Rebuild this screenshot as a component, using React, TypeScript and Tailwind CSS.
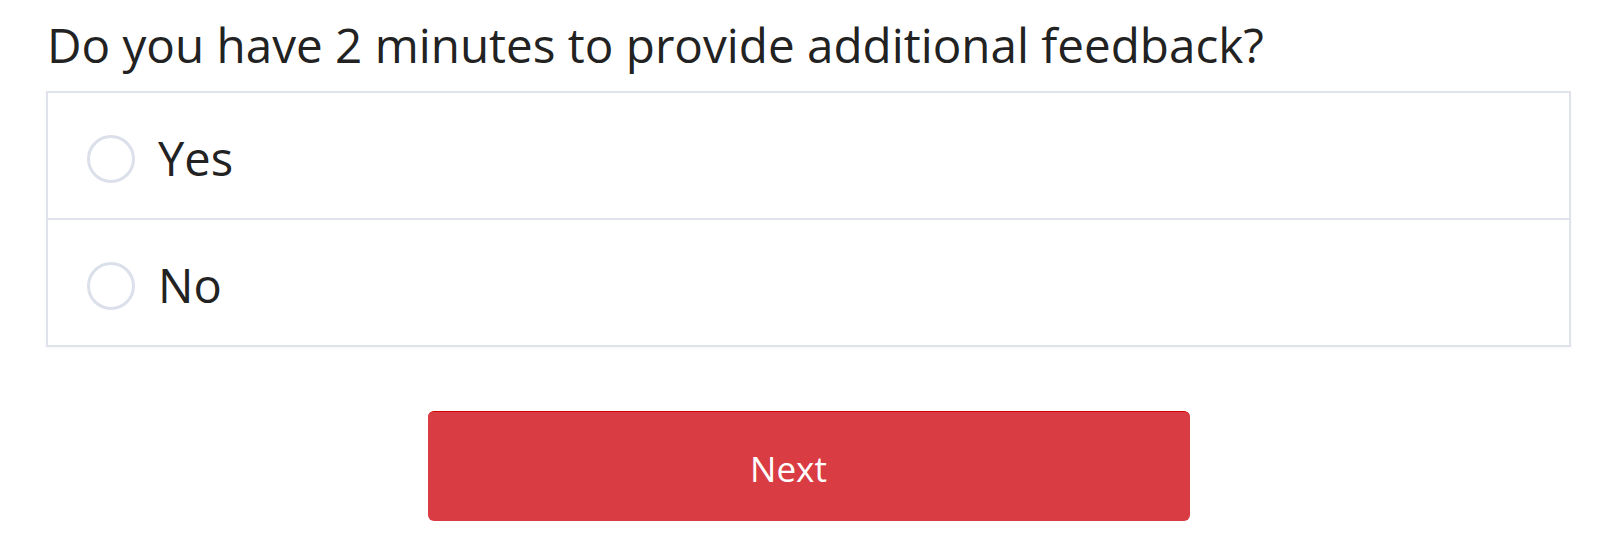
export default function App() {
  const options = ["Yes", "No"];
  return (
    <div
      className="w-[1600px] h-[549px] bg-white pl-[46px] pr-[29px] pt-[13px]"
      style={{ fontFamily: '"Open Sans", sans-serif' }}
    >
      <h1 className="text-[47.6px] leading-[64px] text-[#222] font-normal pl-px">
        Do you have 2 minutes to provide additional feedback?
      </h1>
      <div className="mt-[14px] border-2 border-[#e0e3ec] shadow-[0_1px_3px_rgba(0,0,0,0.04)]">
        {options.map((o, i) => (
          <div
            key={o}
            className={`flex items-center pt-[6px] ${i > 0 ? "h-[127px] border-t-2 border-[#e0e3ec]" : "h-[125px]"}`}
          >
            <div className="ml-[39px] w-[48px] h-[48px] rounded-full border-[3px] border-[#dbe0ea]" />
            <span className="ml-[23px] text-[47px] text-[#222] leading-none">{o}</span>
          </div>
        ))}
      </div>
      <div className="flex justify-center mt-[64px]">
        <button className="w-[762px] h-[110px] rounded-[6px] bg-[#d93c42] border-t border-[#d40000] text-white text-[35px] pr-[40px] pt-[6px]">
          Next
        </button>
      </div>
    </div>
  );
}
